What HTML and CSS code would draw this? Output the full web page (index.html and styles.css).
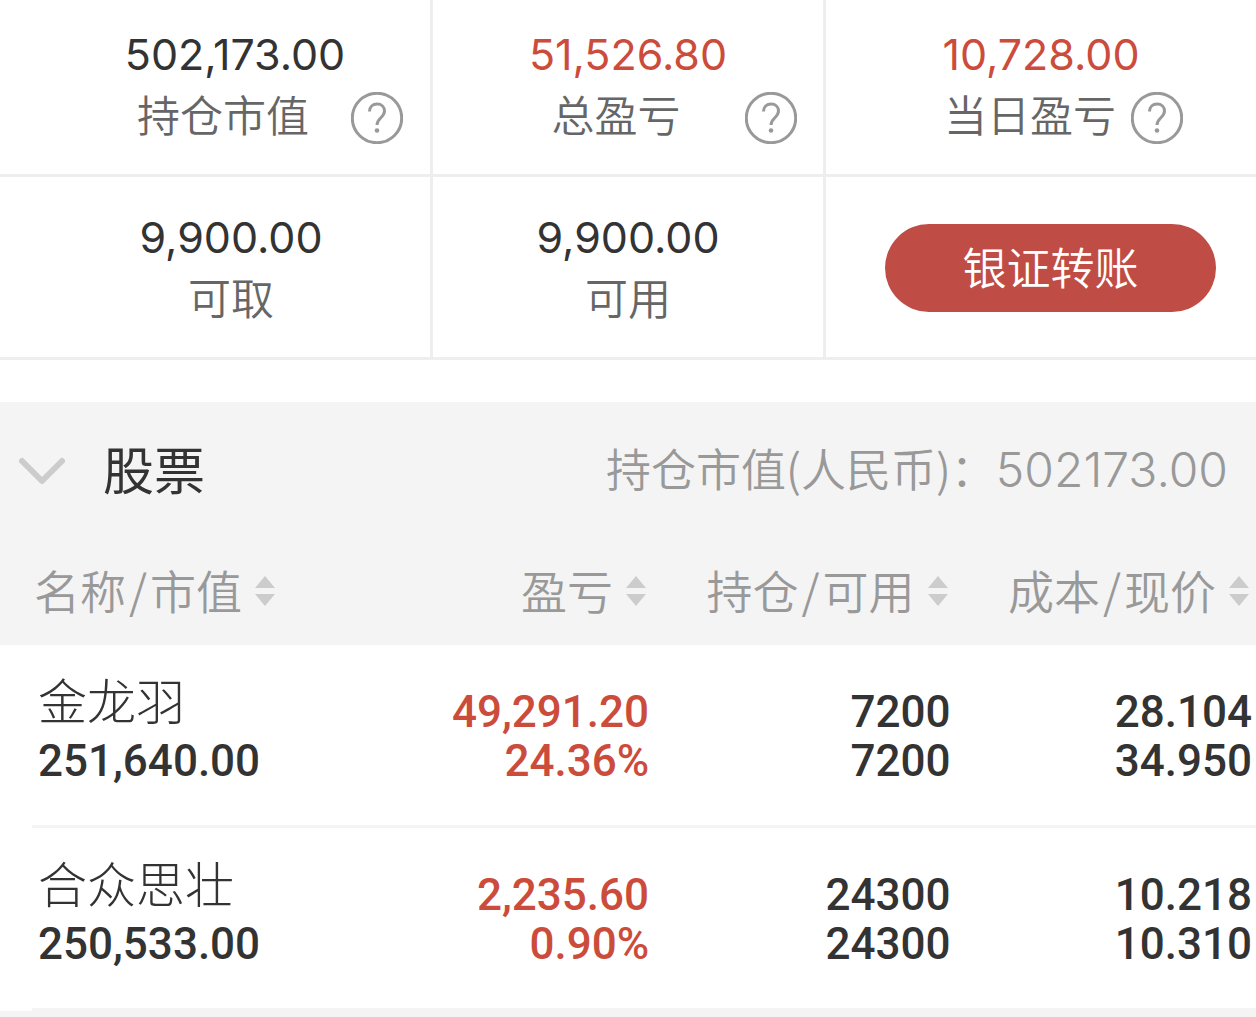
FILE: index.html
```
<!DOCTYPE html>
<html lang="zh-CN">
<head>
    <meta charset="UTF-8">
    <meta name="viewport" content="width=device-width, initial-scale=1.0">
    <title>持仓</title>
    <link rel="stylesheet" href="styles.css">
</head>
<body>
    <section class="summary">
        <div class="cell cell-market">
            <p class="amount">502,173.00</p>
            <div class="label-row">
                <span class="label">持仓市值</span>
                <button class="help" aria-label="持仓市值说明">
                    <svg viewBox="0 0 52 52"><circle cx="26" cy="26" r="24.7"/><path d="M18.5 19.5c0-4.5 3.2-7.5 7.6-7.5s7.4 3 7.4 7c0 6.5-7.5 7-7.5 14"/><circle class="dot" cx="26" cy="38.5" r="2.3"/></svg>
                </button>
            </div>
        </div>
        <div class="cell cell-total">
            <p class="amount red">51,526.80</p>
            <div class="label-row">
                <span class="label">总盈亏</span>
                <button class="help" aria-label="总盈亏说明">
                    <svg viewBox="0 0 52 52"><circle cx="26" cy="26" r="24.7"/><path d="M18.5 19.5c0-4.5 3.2-7.5 7.6-7.5s7.4 3 7.4 7c0 6.5-7.5 7-7.5 14"/><circle class="dot" cx="26" cy="38.5" r="2.3"/></svg>
                </button>
            </div>
        </div>
        <div class="cell cell-today">
            <p class="amount red">10,728.00</p>
            <div class="label-row">
                <span class="label">当日盈亏</span>
                <button class="help" aria-label="当日盈亏说明">
                    <svg viewBox="0 0 52 52"><circle cx="26" cy="26" r="24.7"/><path d="M18.5 19.5c0-4.5 3.2-7.5 7.6-7.5s7.4 3 7.4 7c0 6.5-7.5 7-7.5 14"/><circle class="dot" cx="26" cy="38.5" r="2.3"/></svg>
                </button>
            </div>
        </div>
        <div class="cell cell-cash">
            <p class="amount">9,900.00</p>
            <p class="label">可取</p>
        </div>
        <div class="cell">
            <p class="amount">9,900.00</p>
            <p class="label">可用</p>
        </div>
        <div class="cell cell-transfer">
            <button class="transfer">银证转账</button>
        </div>
    </section>

    <section class="holdings">
        <header class="holdings-header">
            <button class="collapse" aria-label="收起">
                <svg viewBox="0 0 46 28"><path d="M3 4l20 20L43 4"/></svg>
            </button>
            <h2>股票</h2>
            <p class="holdings-total">持仓市值(人民币)：<span>502173.00</span></p>
        </header>

        <table>
            <thead>
                <tr>
                    <th><button class="sort"><span>名称<i>/</i>市值</span><svg viewBox="0 0 22 32"><path d="M11 1l10 12H1zM11 31L1 19h20z"/></svg></button></th>
                    <th><button class="sort"><span>盈亏</span><svg viewBox="0 0 22 32"><path d="M11 1l10 12H1zM11 31L1 19h20z"/></svg></button></th>
                    <th><button class="sort"><span>持仓<i>/</i>可用</span><svg viewBox="0 0 22 32"><path d="M11 1l10 12H1zM11 31L1 19h20z"/></svg></button></th>
                    <th><button class="sort"><span>成本<i>/</i>现价</span><svg viewBox="0 0 22 32"><path d="M11 1l10 12H1zM11 31L1 19h20z"/></svg></button></th>
                </tr>
            </thead>
            <tbody>
                <tr>
                    <td><div class="name">金龙羽</div><div>251,640.00</div></td>
                    <td class="red"><div>49,291.20</div><div>24.36%</div></td>
                    <td><div>7200</div><div>7200</div></td>
                    <td><div>28.104</div><div>34.950</div></td>
                </tr>
                <tr>
                    <td><div class="name">合众思壮</div><div>250,533.00</div></td>
                    <td class="red"><div>2,235.60</div><div>0.90%</div></td>
                    <td><div>24300</div><div>24300</div></td>
                    <td><div>10.218</div><div>10.310</div></td>
                </tr>
            </tbody>
        </table>
    </section>
</body>
</html>
```
FILE: styles.css
```
* {
    box-sizing: border-box;
}

body {
    font-family: "Noto Sans CJK SC", sans-serif;
    font-weight: 350;
    margin: 0;
    background-color: #f4f4f4;
    color: #333;
}

p, h2 {
    margin: 0;
}

button {
    font: inherit;
    color: inherit;
    background: none;
    border: none;
    padding: 0;
    cursor: pointer;
}

svg {
    display: block;
}

.red {
    color: #cc4c3c;
}

/* Account summary */
.summary {
    display: grid;
    grid-template-columns: 433fr 393fr 430fr;
    background-color: #fff;
    padding-bottom: 42px;
}

.cell {
    height: 183px;
    padding-top: 37px;
    border-right: 3px solid #eee;
    border-bottom: 3px solid #eee;
    text-align: center;
}

.cell:nth-child(-n+3) {
    height: 177px;
    padding-top: 31px;
}

.cell:nth-child(3n) {
    border-right: none;
}

.cell-market .amount {
    padding-left: 40px;
}

.cell-cash {
    padding-left: 32px;
}

.amount {
    font-family: Inter, sans-serif;
    font-size: 43px;
    font-weight: 400;
    line-height: 46px;
}

.label {
    font-size: 43px;
    line-height: 72px;
    padding-bottom: 6px;
    color: #666;
}

.label-row {
    display: flex;
    align-items: center;
}

.label-row .label {
    flex: 1;
}

.cell-market .label-row {
    padding: 0 27px 0 95px;
}

.cell-total .label-row {
    padding: 0 26px 0 54px;
}

.cell-today .label-row {
    padding: 0 73px 0 103px;
}

.help {
    padding-top: 4px;
}

.help svg {
    width: 52px;
    height: 52px;
    fill: none;
    stroke: #999;
    stroke-width: 3;
}

.help .dot {
    fill: #999;
    stroke: none;
}

.cell.cell-transfer {
    padding: 2px 40px 0 59px;
    display: flex;
    align-items: center;
}

.transfer {
    width: 100%;
    height: 88px;
    padding-bottom: 4px;
    border-radius: 44px;
    background-color: #bf4d45;
    color: #fff;
    font-size: 44px;
}

/* Holdings */
.holdings-header {
    display: flex;
    align-items: center;
    height: 138px;
    padding: 0 28px 0 19px;
}

.collapse svg {
    width: 46px;
    height: 28px;
    fill: none;
    stroke: #ccc;
    stroke-width: 6;
    stroke-linecap: round;
    stroke-linejoin: round;
}

.holdings-header h2 {
    font-size: 51px;
    font-weight: 400;
    margin-left: 38px;
    padding-bottom: 6px;
}

.holdings-total {
    margin-left: auto;
    padding-bottom: 8px;
    font-size: 45px;
    color: #999;
}

.holdings-total span {
    font-family: Inter, sans-serif;
    font-size: 48px;
}

table {
    width: 100%;
    table-layout: fixed;
    border-collapse: collapse;
}

th {
    height: 105px;
    padding: 0 6px 4px 0;
    font-size: 46px;
    font-weight: 350;
    color: #999;
}

th:first-child {
    width: 28%;
    padding-left: 34px;
}

th:nth-child(2) {
    width: 24%;
}

.sort {
    display: flex;
    align-items: center;
    gap: 12px;
    margin-left: auto;
    white-space: nowrap;
}

th:first-child .sort {
    margin-left: 0;
}

.sort span {
    padding-bottom: 4px;
}

.sort i {
    font-style: normal;
    padding: 0 3px;
}

.sort svg {
    width: 22px;
    height: 32px;
    fill: #ccc;
}

tbody {
    background-color: #fff;
}

td {
    height: 183px;
    padding: 0 4px 42px 0;
    vertical-align: bottom;
    text-align: right;
    font-family: Roboto, sans-serif;
    font-size: 44px;
    font-weight: 500;
    line-height: 49px;
    background: linear-gradient(#f4f4f4, #f4f4f4) 0 100% / 100% 3px no-repeat;
}

/* divider starts a little in from the screen edge */
td:first-child {
    padding-left: 38px;
    text-align: left;
    background-position: 32px 100%;
}

.name {
    font-family: "Noto Sans CJK SC", sans-serif;
    font-size: 49px;
    font-weight: 300;
    line-height: 60px;
    padding-bottom: 8px;
}
```
